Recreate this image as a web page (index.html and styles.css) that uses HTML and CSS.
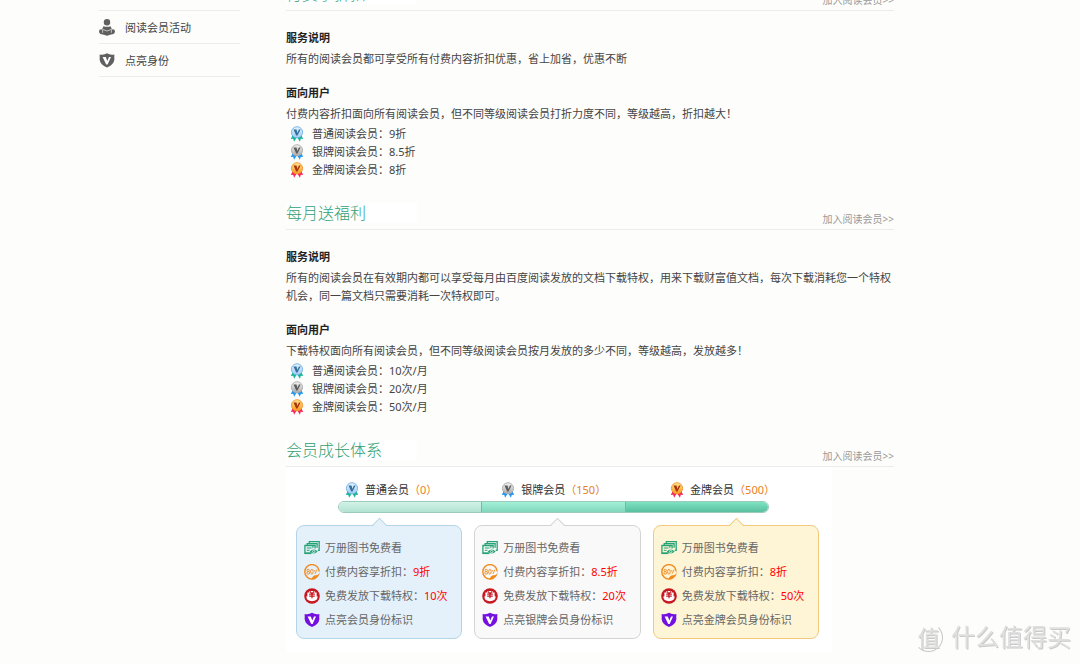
FILE: index.html
```html
<!DOCTYPE html>
<html lang="zh-CN">
<head>
<meta charset="utf-8">
<title>阅读会员</title>
<meta name="viewport" content="width=device-width, initial-scale=1">
<link rel="stylesheet" href="styles.css">
</head>
<body>
<svg class="defs" aria-hidden="true">
  <defs>
    <linearGradient id="g-blue" x2="0" y2="1"><stop offset="0" stop-color="#e4f3ff"/><stop offset="1" stop-color="#9dcbf2"/></linearGradient>
    <linearGradient id="g-silver" x2="0" y2="1"><stop offset="0" stop-color="#f4f4f4"/><stop offset="1" stop-color="#a8a8a8"/></linearGradient>
    <linearGradient id="g-gold" x2="0" y2="1"><stop offset="0" stop-color="#ffe790"/><stop offset="1" stop-color="#f9961f"/></linearGradient>
    <symbol id="ribbon" viewBox="0 0 14 16">
      <path d="M3 8.500.8 13l2.400-.3.900 3.100L6.700 11.500h.6l2.600 4.300.9-3.100 2.400.3L11 8.500z" fill="currentColor"/>
    </symbol>
    <symbol id="medal-blue" viewBox="0 0 14 16">
      <use href="#ribbon" color="#14b596"/><circle cx="7" cy="6.300" r="5.600" fill="url(#g-blue)" stroke="#6fb0e6" stroke-width=".9"/>
      <path d="M3.500 3.600h3l.9 3.400 1.500-3.400h1.700L7.500 9.600H6.200z" fill="#356f9c"/>
    </symbol>
    <symbol id="medal-silver" viewBox="0 0 14 16">
      <use href="#ribbon" color="#1c96f4"/><circle cx="7" cy="6.300" r="5.600" fill="url(#g-silver)" stroke="#acacac" stroke-width=".9"/>
      <path d="M3.500 3.600h3l.9 3.400 1.500-3.400h1.700L7.500 9.600H6.200z" fill="#5c5c5c"/>
    </symbol>
    <symbol id="medal-gold" viewBox="0 0 14 16">
      <use href="#ribbon" color="#f3285f"/><circle cx="7" cy="6.300" r="5.600" fill="url(#g-gold)" stroke="#f0922c" stroke-width=".9"/>
      <path d="M3.500 3.600h3l.9 3.400 1.500-3.400h1.700L7.500 9.600H6.200z" fill="#a8340c"/>
    </symbol>
    <symbol id="books" viewBox="0 0 16 16">
      <path d="M5.300 3.500V1.700h9.900v8.600h-1.500M3.200 5.300V3.600h9.900v4.200M7 13.400H.9V5.500h10.200v3" fill="none" stroke="#27a276" stroke-width="1.300"/>
      <path d="M.9 12.400h6.500v1.700H.9z" fill="#27a276"/>
      <path d="M2.800 8h4.700M2.800 10.300h2.700M8.900 6v2.200" stroke="#27a276"/>
      <path d="M5.700 11.500q4-4.200 8 0q-4 4.200-8 0z" fill="#27a276"/><circle cx="9.700" cy="11.500" r="1.200" fill="none" stroke="#dff3ec" stroke-width=".8"/>
    </symbol>
    <symbol id="discount" viewBox="0 0 16 16">
      <path d="M15.200 7.500a7.200 7.200 0 1 0-7.200 7.500" fill="none" stroke="#f08a1d" stroke-width="1.400"/>
      <path d="M15.900 7.400q-.6 7.600-8.300 8.500.6-4.600 4.400-4.600 3-.6 3.900-3.900z" fill="#f08a1d"/>
      <g fill="none" stroke="#f08a1d" stroke-width=".9"><ellipse cx="4.200" cy="6.400" rx="1.200" ry="1.100"/><ellipse cx="4.200" cy="8.900" rx="1.400" ry="1.300"/><ellipse cx="7.900" cy="7.700" rx="1.300" ry="2.400"/><path d="M10.700 6.100v1.400M13.200 5.400 11 9.800"/></g>
    </symbol>
    <symbol id="yuan" viewBox="0 0 16 16">
      <circle cx="8" cy="8" r="7.800" fill="#c71822"/>
      <path d="M5 3h6l-.6 1.500 2.200.1v3.700l1.100.2q-.3 4.600-5.700 4.700-5.400-.1-5.700-4.700l1.100-.2V4.600l2.200-.1z" fill="#fff"/>
      <path d="M5.800 3.300 8 5.700l2.200-2.400M5.200 6.200h5.600M5.200 8.200h5.600M8 5.700v4.600" fill="none" stroke="#c71822" stroke-width="1.200"/>
    </symbol>
    <symbol id="shield" viewBox="0 0 16 16">
      <path d="M.6 2Q5 2.800 8 .8q3 2 7.400 1.200-.3 3.200 0 5.100Q14.800 12.500 8 15 1.200 12.500.600 7.100.900 5.200.6 2z" fill="currentColor"/>
      <path d="M3.600 4.500h3.200l1.500 4 1.700-4H12L8.600 12H7.200z" fill="#fff"/>
    </symbol>
    <symbol id="reader" viewBox="0 0 16 17">
      <circle cx="8" cy="3.300" r="3.200" fill="currentColor"/>
      <path d="M4.500 7.200q3.500 1.300 7 0l1.500 3.200q3-.4 3 2.200-.3 2.800-4 3l-4 1.200-4-1.200q-3.700-.2-4-3 0-2.600 3-2.200z" fill="currentColor"/>
      <path d="M3.600 10.400 8 12l4.400-1.600M3.600 10.400v3.400M12.400 10.400v3.400" fill="none" stroke="#fff" stroke-width=".6"/>
    </symbol>
  </defs>
</svg>

<div class="page">
  <nav class="sidebar">
    <ul class="side-list">
      <li><a class="side-link" href="#"><svg class="icon side-icon"><use href="#reader"/></svg><span>阅读会员活动</span></a></li>
      <li><a class="side-link" href="#"><svg class="icon side-icon"><use href="#shield"/></svg><span>点亮身份</span></a></li>
    </ul>
  </nav>

  <main class="content">
    <section>
      <header class="section-head"><h2 class="section-title">付费享折扣</h2><a class="join" href="#">加入阅读会员&gt;&gt;</a></header>
      <div class="section-body">
        <h3 class="subhead">服务说明</h3>
        <p class="text">所有的阅读会员都可享受所有付费内容折扣优惠，省上加省，优惠不断</p>
        <h3 class="subhead">面向用户</h3>
        <p class="text">付费内容折扣面向所有阅读会员，但不同等级阅读会员打折力度不同，等级越高，折扣越大！</p>
        <ul class="levels">
          <li><svg class="medal"><use href="#medal-blue"/></svg>普通阅读会员：9折</li>
          <li><svg class="medal"><use href="#medal-silver"/></svg>银牌阅读会员：8.5折</li>
          <li><svg class="medal"><use href="#medal-gold"/></svg>金牌阅读会员：8折</li>
        </ul>
      </div>
    </section>

    <section>
      <header class="section-head"><h2 class="section-title">每月送福利</h2><a class="join" href="#">加入阅读会员&gt;&gt;</a></header>
      <div class="section-body">
        <h3 class="subhead">服务说明</h3>
        <p class="text">所有的阅读会员在有效期内都可以享受每月由百度阅读发放的文档下载特权，用来下载财富值文档，每次下载消耗您一个特权机会，同一篇文档只需要消耗一次特权即可。</p>
        <h3 class="subhead">面向用户</h3>
        <p class="text">下载特权面向所有阅读会员，但不同等级阅读会员按月发放的多少不同，等级越高，发放越多！</p>
        <ul class="levels">
          <li><svg class="medal"><use href="#medal-blue"/></svg>普通阅读会员：10次/月</li>
          <li><svg class="medal"><use href="#medal-silver"/></svg>银牌阅读会员：20次/月</li>
          <li><svg class="medal"><use href="#medal-gold"/></svg>金牌阅读会员：50次/月</li>
        </ul>
      </div>
    </section>

    <section>
      <header class="section-head"><h2 class="section-title">会员成长体系</h2><a class="join" href="#">加入阅读会员&gt;&gt;</a></header>
      <div class="growth">
        <ul class="grades">
          <li><svg class="medal"><use href="#medal-blue"/></svg><span>普通会员<b class="points">（0）</b></span></li>
          <li><svg class="medal"><use href="#medal-silver"/></svg><span>银牌会员<b class="points">（150）</b></span></li>
          <li><svg class="medal"><use href="#medal-gold"/></svg><span>金牌会员<b class="points">（500）</b></span></li>
        </ul>
        <div class="bar"><i class="seg seg-low"></i><i class="seg seg-mid"></i><i class="seg seg-high"></i></div>
        <div class="cards">
          <ul class="card card-blue">
            <li><svg class="icon"><use href="#books"/></svg>万册图书免费看</li>
            <li><svg class="icon"><use href="#discount"/></svg><span>付费内容享折扣：<em>9折</em></span></li>
            <li><svg class="icon"><use href="#yuan"/></svg><span>免费发放下载特权：<em>10次</em></span></li>
            <li><svg class="icon violet"><use href="#shield"/></svg>点亮会员身份标识</li>
          </ul>
          <ul class="card card-gray">
            <li><svg class="icon"><use href="#books"/></svg>万册图书免费看</li>
            <li><svg class="icon"><use href="#discount"/></svg><span>付费内容享折扣：<em>8.5折</em></span></li>
            <li><svg class="icon"><use href="#yuan"/></svg><span>免费发放下载特权：<em>20次</em></span></li>
            <li><svg class="icon violet"><use href="#shield"/></svg>点亮银牌会员身份标识</li>
          </ul>
          <ul class="card card-gold">
            <li><svg class="icon"><use href="#books"/></svg>万册图书免费看</li>
            <li><svg class="icon"><use href="#discount"/></svg><span>付费内容享折扣：<em>8折</em></span></li>
            <li><svg class="icon"><use href="#yuan"/></svg><span>免费发放下载特权：<em>50次</em></span></li>
            <li><svg class="icon violet"><use href="#shield"/></svg>点亮金牌会员身份标识</li>
          </ul>
        </div>
      </div>
    </section>
  </main>
</div>

<div class="watermark"><span class="watermark-mark">值</span><span>什么值得买</span></div>
</body>
</html>
```

FILE: styles.css
```css
* { box-sizing: border-box; }

body {
  margin: 0;
  background: #fdfdfb;
  color: #444;
  font: 11px/18px "Noto Sans", "Noto Sans CJK SC", sans-serif;
}

ul, h2, h3, p { margin: 0; padding: 0; }
ul { list-style: none; }
a { color: inherit; text-decoration: none; }
em { color: #f00; font-style: normal; }

.defs { position: absolute; width: 0; height: 0; }

.page {
  display: grid;
  grid-template-columns: 141px minmax(0, 1fr);
  gap: 46px;
  padding: 0 186px 0 99px;
  overflow: hidden;
}

.icon { flex: none; width: 16px; height: 16px; }
.medal { flex: none; width: 14px; height: 16px; }
.violet { color: #7410e0; }

.sidebar { padding-top: 10px; }
.side-list { border-bottom: 1px solid #ececec; }
.side-link {
  display: flex;
  align-items: center;
  gap: 10px;
  height: 33px;
  padding-top: 1px;
  border-top: 1px solid #ececec;
}
.side-icon { height: 17px; color: #606060; }

.content { margin-top: -40px; }

.section-head {
  display: flex;
  justify-content: space-between;
  align-items: flex-end;
  height: 51px;
  border-bottom: 1px solid #ececec;
}
.section-title {
  min-width: 131px;
  margin-bottom: 6px;
  background: #fff;
  color: #2f9f72;
  font-size: 16px;
  font-weight: 300;
  line-height: 20px;
}
.join {
  margin-bottom: 1px;
  color: #999;
  font-size: 10px;
}

.section-body { padding-top: 18px; }
.subhead {
  margin-bottom: 3px;
  color: #222;
  font-size: 11px;
  font-weight: 700;
}
.text + .subhead { margin-top: 16px; }

.levels { padding: 2px 0 0 4px; }
.levels li { display: flex; align-items: center; gap: 8px; }

.growth {
  max-width: 546px;
  padding: 14px 13px 13px 10px;
  background: #fff;
}
.grades {
  display: flex;
  justify-content: space-between;
  padding: 0 44px 0 49px;
  color: #333;
}
.grades li { display: flex; align-items: center; gap: 6px; }
.points { color: #e8801d; font-weight: 400; }

.bar {
  display: flex;
  height: 12px;
  margin: 2px 50px 12px 42px;
  border: 1px solid #9ccbb9;
  border-radius: 6px;
  overflow: hidden;
}
.seg { flex: 1; }
.seg + .seg { border-left: 1px solid #7fb5a1; }
.seg-low { background: linear-gradient(#d2f2e7, #b2e2d2); }
.seg-mid { background: linear-gradient(#a2f0d8, #82d6bb); }
.seg-high { background: linear-gradient(#7fe3c3, #58bf9f); }

.cards {
  display: grid;
  grid-template-columns: repeat(3, minmax(0, 1fr));
  gap: 12px;
}
.card {
  position: relative;
  padding: 10px 0 6px 7px;
  border: 1px solid var(--edge);
  border-radius: 8px;
  background: var(--fill);
  color: #666;
  line-height: 24px;
  white-space: nowrap;
}
.card li { display: flex; align-items: center; gap: 5px; }
.card::before {
  content: "";
  position: absolute;
  top: -6px;
  left: calc(50% - 5px);
  width: 10px;
  height: 10px;
  border: solid var(--edge);
  border-width: 1px 0 0 1px;
  background: linear-gradient(135deg, var(--fill) 50%, transparent 50%);
  transform: rotate(45deg);
}
.card-blue { --edge: #b4d5e8; --fill: #e5f1fa; }
.card-gray { --edge: #d4d4d4; --fill: #f9f9f9; }
.card-gold { --edge: #f3ca7d; --fill: #fef5d6; }

.watermark {
  position: fixed;
  right: 9px;
  bottom: 11px;
  display: flex;
  align-items: center;
  gap: 8px;
  color: #e0e0e0;
  font-size: 24px;
  line-height: 32px;
  text-shadow: 1px 1px 0 #cacaca;
}
.watermark-mark {
  width: 29px;
  height: 29px;
  border: 1px solid transparent;
  border-right-color: #c8c8c8;
  border-bottom-color: #c8c8c8;
  border-radius: 50%;
  font-size: 22px;
  line-height: 26px;
  text-align: center;
}
```
